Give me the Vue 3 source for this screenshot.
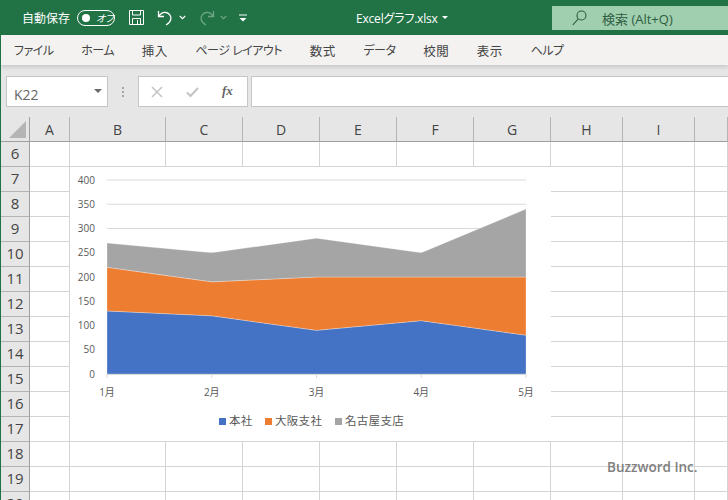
<script setup>
const tabs = [
    { label: 'ファイル' },
    { label: 'ホーム' },
    { label: '挿入', kanji: true },
    { label: 'ページ レイアウト' },
    { label: '数式', kanji: true },
    { label: 'データ' },
    { label: '校閲', kanji: true },
    { label: '表示', kanji: true },
    { label: 'ヘルプ' },
]
const cols = ['A', 'B', 'C', 'D', 'E', 'F', 'G', 'H', 'I', '']
const rows = [6, 7, 8, 9, 10, 11, 12, 13, 14, 15, 16, 17, 18, 19, 20]

// chart scale, in page pixels
const xs = [107, 211.75, 316.5, 421.25, 526]
const y0 = 374
const scale = 194 / 400
const months = ['1月', '2月', '3月', '4月', '5月']
const ticks = [0, 50, 100, 150, 200, 250, 300, 350, 400]

const series = [
    { name: '本社', color: '#4472c4', values: [130, 120, 90, 110, 80] },
    { name: '大阪支社', color: '#ed7d31', values: [90, 70, 110, 90, 120] },
    { name: '名古屋支店', color: '#a5a5a5', values: [50, 60, 80, 50, 140] },
]

const legend = [
    { name: '本社', color: '#4472c4', x: 219 },
    { name: '大阪支社', color: '#ed7d31', x: 265 },
    { name: '名古屋支店', color: '#a5a5a5', x: 335 },
]

function yOf(v) {
    return y0 - v * scale
}

// stack the series from the bottom
const areas = []
let base = [0, 0, 0, 0, 0]
for (const s of series) {
    const top = s.values.map((v, i) => v + base[i])
    const upper = top.map((v, i) => `${xs[i]},${yOf(v)}`)
    const lower = base.map((v, i) => `${xs[i]},${yOf(v)}`).reverse()
    areas.push({ color: s.color, points: [...upper, ...lower].join(' ') })
    base = top
}
</script>

<template>
    <div class="window">
        <header class="titlebar">
            <span class="autosave">自動保存</span>
            <span class="toggle"><i class="knob"></i><span class="off">オフ</span></span>
            <svg class="qat save" width="17" height="17" viewBox="0 0 17 17" fill="none" stroke="#fff" stroke-width="1">
                <path d="M1.5 1.5h14v14h-14z" />
                <path d="M4.5 1.5v4.5h8v-4.5M4.5 15.5v-6h8v6M9.5 11v4.5" />
            </svg>
            <svg class="qat undo" width="16" height="18" viewBox="0 0 16 18" fill="none" stroke="#fff" stroke-width="1.3">
                <path d="M1.5 2v5.5h5.5M1.8 7.2C4 4 6.500 3 9 3.500c3.500.8 5.500 3.800 4.800 6.800-.5 2.300-2.300 4.200-4.800 5.700" />
            </svg>
            <svg class="caret-small" width="7" height="5" viewBox="0 0 7 5" fill="none" stroke="#fff" stroke-width="1.200">
                <path d="M.8 1l2.700 2.700L6.200 1" />
            </svg>
            <svg class="qat redo" width="16" height="18" viewBox="0 0 16 18" fill="none" stroke="#6fa585" stroke-width="1.300">
                <path d="M14.500 2v5.500H9M14.200 7.200C12 4 9.500 3 7 3.500c-3.500.8-5.500 3.800-4.800 6.800.5 2.300 2.300 4.200 4.800 5.700" />
            </svg>
            <svg class="caret-small dim" width="7" height="5" viewBox="0 0 7 5" fill="none" stroke="#6fa585" stroke-width="1.200">
                <path d="M.8 1l2.700 2.700L6.200 1" />
            </svg>
            <svg class="customize" width="8" height="8" viewBox="0 0 8 8">
                <path d="M0 .5h8v1H0z" fill="#fff" />
                <path d="M.5 4h7L4 7.500z" fill="#fff" />
            </svg>
            <span class="filename">Excelグラフ.xlsx</span>
            <i class="file-caret"></i>
            <div class="search">
                <svg width="15" height="16" viewBox="0 0 15 16" fill="none" stroke="#2c5c40" stroke-width="1.100">
                    <circle cx="9.500" cy="5.500" r="4.500" />
                    <path d="M6.200 8.800L.8 15" />
                </svg>
                <span>検索 (Alt+Q)</span>
            </div>
        </header>

        <nav class="tabs">
            <span v-for="tab in tabs" :key="tab.label" class="tab" :class="{ kanji: tab.kanji }">{{ tab.label }}</span>
        </nav>

        <div class="formula">
            <div class="namebox">
                <span class="name-text">K22</span>
                <i class="name-caret"></i>
            </div>
            <div class="dots"><i></i><i></i><i></i></div>
            <div class="fx-buttons">
                <svg width="12" height="12" viewBox="0 0 12 12" fill="none" stroke="#c4c4c4" stroke-width="1.500">
                    <path d="M1 1l10 10M11 1L1 11" />
                </svg>
                <svg width="13" height="12" viewBox="0 0 13 12" fill="none" stroke="#c4c4c4" stroke-width="2">
                    <path d="M1 6.500l3.500 3.500L12 2" />
                </svg>
                <span class="fx">fx</span>
            </div>
            <div class="input"></div>
        </div>

        <div class="sheet">
            <div class="corner"><i class="triangle"></i></div>
            <div v-for="(c, i) in cols" :key="i" class="col-head">{{ c }}</div>
            <template v-for="r in rows" :key="r">
                <div class="row-head">{{ r }}</div>
                <div v-for="(c, i) in cols" :key="i" class="cell"></div>
            </template>

            <svg class="chart" width="481" height="274" viewBox="70 167 481 274">
                <rect x="70" y="167" width="481" height="274" fill="#fff" />
                <line v-for="t in ticks" :key="t" x1="107" x2="526" :y1="yOf(t)" :y2="yOf(t)" stroke="#d9d9d9" />
                <polygon
                    v-for="a in areas"
                    :key="a.color"
                    :points="a.points"
                    :fill="a.color"
                    stroke="#fff"
                    stroke-opacity="0.35"
                    stroke-width="0.8"
                />
                <line x1="107" x2="526" y1="374.500" y2="374.500" stroke="#d9d9d9" />
                <line v-for="x in xs" :key="x" :x1="x" :x2="x" y1="374" y2="378" stroke="#d9d9d9" />
                <text v-for="t in ticks" :key="t" x="95" :y="yOf(t) + 3.500" text-anchor="end" class="axis">{{ t }}</text>
                <text v-for="(m, i) in months" :key="m" :x="xs[i]" y="396" text-anchor="middle" class="axis">{{ m }}</text>
                <template v-for="l in legend" :key="l.name">
                    <rect :x="l.x" y="418" width="7" height="7" :fill="l.color" />
                    <text :x="l.x + 10" y="425" class="legend">{{ l.name }}</text>
                </template>
            </svg>

            <div class="watermark">Buzzword Inc.</div>
        </div>
    </div>
</template>

<style>
html,
body {
    margin: 0;
    overflow: hidden;
    background: #fff;
}
</style>

<style scoped>
.window {
    width: 728px;
    height: 500px;
    box-sizing: border-box;
    border-left: 1px solid #217346;
    overflow: hidden;
    display: flex;
    flex-direction: column;
    font-family: "Open Sans", "Noto Sans CJK JP", sans-serif;
    font-feature-settings: "palt";
    color: #444;
}

.titlebar {
    flex: none;
    height: 35px;
    margin-left: -1px;
    background: #217346;
    color: #fff;
    display: flex;
    align-items: center;
    font-size: 12px;
    position: relative;
}

.autosave {
    margin-left: 22px;
    width: 55px;
    font-size: 12px;
    white-space: nowrap;
}

.toggle {
    box-sizing: border-box;
    width: 38px;
    height: 16px;
    border: 1px solid #fff;
    border-radius: 8px;
    display: flex;
    align-items: center;
    padding-left: 4px;
    gap: 6px;
}

.knob {
    width: 8px;
    height: 8px;
    border-radius: 50%;
    background: #fff;
}

.off {
    font-size: 10px;
    line-height: 1;
    font-style: italic;
}

.qat {
    flex: none;
}

.save {
    margin-left: 13px;
}

.undo {
    margin-left: 12px;
}

.caret-small {
    margin-left: 6px;
    flex: none;
}

.redo {
    margin-left: 13px;
}

.caret-small.dim {
    margin-left: 5px;
}

.customize {
    margin-left: 12px;
    flex: none;
}

.filename {
    margin-left: 109px;
    font-size: 12px;
    letter-spacing: -0.2px;
    white-space: nowrap;
    width: 82px;
}

.file-caret {
    margin-left: 4px;
    border-left: 3px solid transparent;
    border-right: 3px solid transparent;
    border-top: 3px solid #fff;
}

.search {
    position: absolute;
    left: 552px;
    top: 6px;
    width: 176px;
    height: 24px;
    background: #9fcfae;
    color: #2f5d43;
    display: flex;
    align-items: center;
    padding-left: 20px;
    gap: 15px;
    box-sizing: border-box;
    font-size: 13px;
}

.tabs {
    flex: none;
    height: 30px;
    background: #f3f2f1;
    display: flex;
    align-items: center;
    padding-left: 13px;
    gap: 27.700px;
    font-size: 12px;
    letter-spacing: -0.5px;
    color: #444;
    position: relative;
    box-shadow: 0 2px 4px rgba(0, 0, 0, 0.14);
}

.tab {
    white-space: nowrap;
}

.tab.kanji {
    font-size: 12.500px;
    letter-spacing: 0.5px;
}

.formula {
    flex: none;
    height: 52px;
    background: #e6e6e6;
    display: flex;
    align-items: flex-start;
    padding: 11px 0 0 5px;
    box-sizing: border-box;
}

.namebox,
.fx-buttons,
.input {
    box-sizing: border-box;
    height: 31px;
    background: #fff;
    border: 1px solid #c6c6c6;
}

.namebox {
    width: 102px;
    display: flex;
    align-items: center;
    justify-content: space-between;
    padding: 0 5px 0 7px;
    font-size: 14px;
    color: #666;
}

.name-text {
    margin-top: 5px;
}

.name-caret {
    border-left: 4px solid transparent;
    border-right: 4px solid transparent;
    border-top: 4px solid #6a6a6a;
    margin-bottom: 2px;
}

.dots {
    width: 30px;
    height: 31px;
    display: flex;
    flex-direction: column;
    align-items: center;
    justify-content: center;
    gap: 2px;
}

.dots i {
    width: 2px;
    height: 2px;
    background: #a6a6a6;
}

.fx-buttons {
    width: 110px;
    display: flex;
    align-items: center;
    padding-left: 12px;
    gap: 23px;
}

.fx {
    font-family: "Liberation Serif", serif;
    font-style: italic;
    font-weight: 700;
    font-size: 13px;
    color: #666;
    margin-top: -2px;
}

.input {
    flex: 1;
    margin-left: 3px;
    border-right: none;
}

.sheet {
    position: relative;
    flex: 1;
    display: grid;
    grid-template-columns: 29px 40px 96px 77px 77px 77px 77px 77px 72px 72px 33px;
    grid-auto-rows: 25px;
    overflow: hidden;
    background: #fff;
}

.corner,
.col-head {
    box-sizing: border-box;
    background: #e6e6e6;
    border-bottom: 1px solid #9f9f9f;
}

.corner {
    border-right: 1px solid #9f9f9f;
    position: relative;
}

.triangle {
    position: absolute;
    left: 8px;
    top: 4px;
    width: 0;
    height: 0;
    border-left: 17px solid transparent;
    border-bottom: 17px solid #b5b5b5;
}

.col-head {
    border-right: 1px solid #b4b4b4;
    display: flex;
    align-items: center;
    justify-content: center;
    font-size: 14px;
    color: #444;
}

.col-head:last-of-type {
    border-right: none;
}

.row-head {
    box-sizing: border-box;
    background: #e6e6e6;
    border-right: 1px solid #9f9f9f;
    border-bottom: 1px solid #b4b4b4;
    display: flex;
    align-items: center;
    justify-content: center;
    padding-bottom: 2px;
    font-size: 15px;
    color: #444;
}

.cell {
    box-sizing: border-box;
    border-right: 1px solid #d4d4d4;
    border-bottom: 1px solid #d4d4d4;
}

.chart {
    position: absolute;
    left: 69px;
    top: 50px;
}

.axis {
    font-family: "Open Sans", "Noto Sans CJK JP", sans-serif;
    font-size: 10px;
    fill: #595959;
}

.legend {
    font-family: "Noto Sans CJK JP", sans-serif;
    font-size: 11.500px;
    letter-spacing: 0.3px;
    fill: #595959;
}

.watermark {
    position: absolute;
    left: 606px;
    top: 341px;
    font-family: "Open Sans", sans-serif;
    font-size: 13.500px;
    font-weight: 600;
    color: #808080;
    white-space: nowrap;
}
</style>
